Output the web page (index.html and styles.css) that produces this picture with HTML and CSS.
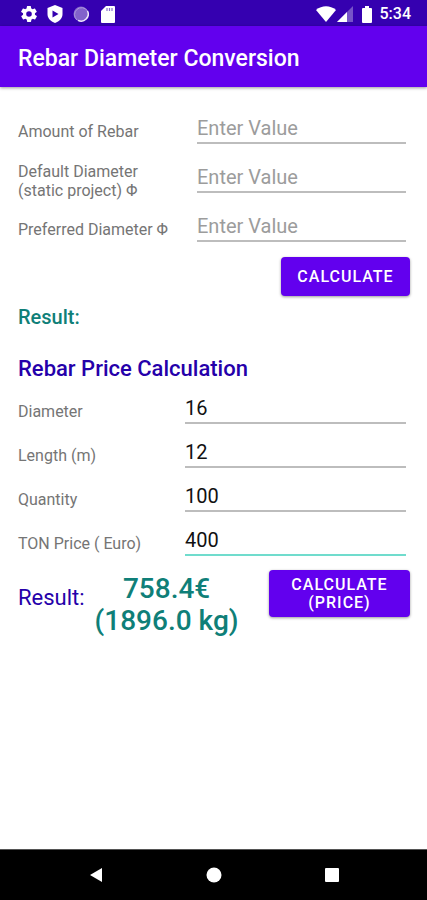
FILE: index.html
```html
<!DOCTYPE html>
<html lang="en">
<head>
<meta charset="utf-8">
<meta name="viewport" content="width=device-width, initial-scale=1">
<title>Rebar Diameter Conversion</title>
<link rel="stylesheet" href="styles.css">
</head>
<body>
<div class="status-bar">
  <div class="status-icons">
    <svg class="gear" viewBox="2 2 20 20"><path fill="#fff" d="M19.4 13a7.500 7.500 0 0 0 0-2l2.100-1.600a.5.5 0 0 0 .1-.6l-2-3.500a.5.5 0 0 0-.6-.2l-2.500 1a7.300 7.300 0 0 0-1.700-1l-.4-2.600a.5.5 0 0 0-.5-.4h-4a.5.5 0 0 0-.5.4l-.4 2.600a7.700 7.700 0 0 0-1.700 1l-2.500-1a.5.5 0 0 0-.6.2l-2 3.500a.5.5 0 0 0 .1.6L4.600 11a7.900 7.900 0 0 0 0 2l-2.100 1.600a.5.5 0 0 0-.1.6l2 3.500c.1.2.4.3.6.2l2.500-1a7.300 7.300 0 0 0 1.700 1l.4 2.600c0 .3.2.5.5.5h4c.3 0 .5-.2.5-.5l.4-2.600a7.700 7.700 0 0 0 1.700-1l2.500 1c.2.1.5 0 .6-.2l2-3.500a.5.5 0 0 0-.1-.6zM12 15.500a3.500 3.500 0 1 1 0-7 3.500 3.500 0 0 1 0 7z"/></svg>
    <svg class="shield" viewBox="0 0 16 18"><path fill="#fff" d="M8 0 .5 3v6c0 4 3 7.500 7.500 9 4.500-1.500 7.500-5 7.500-9V3z"/><path fill="#3500b0" d="M5.500 5.500v7l6-3.500z"/></svg>
    <svg class="sync" viewBox="0 0 16 16"><circle cx="8" cy="8" r="7.500" fill="#8262cb"/><path d="M14.500 5A7 7 0 0 1 5 14.300" fill="none" stroke="#eee6fa" stroke-width="1.500"/><path d="M4 14A7 7 0 1 1 14.500 5" fill="none" stroke="#ac98dd"/></svg>
    <svg class="card" viewBox="0 0 14 17"><path fill="#fff" d="M5 0h8a1 1 0 0 1 1 1v15a1 1 0 0 1-1 1H1a1 1 0 0 1-1-1V5z"/><path stroke="#8a70d0" stroke-width="1.200" d="M6 2v3M8.500 2v3M11 2v3"/></svg>
  </div>
  <div class="status-system">
    <svg class="wifi" viewBox="0 0 20 16"><path fill="#fff" d="M0 4C6-1 14-1 20 4L10 16z"/></svg>
    <svg class="signal" viewBox="0 0 16 16"><path fill="#7653c8" d="M16 0v16H0z"/><path fill="#fff" d="M10 6v10H0z"/></svg>
    <svg class="battery" viewBox="0 0 10 17"><path fill="#fff" d="M3 0h4v2h2a1 1 0 0 1 1 1v13a1 1 0 0 1-1 1H1a1 1 0 0 1-1-1V3a1 1 0 0 1 1-1h2z"/></svg>
    <span class="clock">5:34</span>
  </div>
</div>
<header class="app-bar"><h1>Rebar Diameter Conversion</h1></header>
<main>
  <form class="conversion">
    <div class="row"><label for="amount">Amount of Rebar</label><input id="amount" type="text" placeholder="Enter Value"></div>
    <div class="row"><label for="default">Default Diameter<br>(static project) Φ</label><input id="default" type="text" placeholder="Enter Value"></div>
    <div class="row"><label for="preferred">Preferred Diameter Φ</label><input id="preferred" type="text" placeholder="Enter Value"></div>
    <button class="calculate" type="button">CALCULATE</button>
    <p class="result">Result:</p>
  </form>
  <form class="price">
    <h2>Rebar Price Calculation</h2>
    <div class="row"><label for="diameter">Diameter</label><input id="diameter" type="text" value="16"></div>
    <div class="row"><label for="length">Length (m)</label><input id="length" type="text" value="12"></div>
    <div class="row"><label for="quantity">Quantity</label><input id="quantity" type="text" value="100"></div>
    <div class="row"><label for="ton">TON Price ( Euro)</label><input id="ton" class="active" type="text" value="400"></div>
    <div class="summary">
      <span class="summary-label">Result:</span>
      <output class="total" for="diameter length quantity ton">758.4€<br>(1896.0 kg)</output>
      <button class="calculate-price" type="button">CALCULATE<br>(PRICE)</button>
    </div>
  </form>
</main>
<nav class="system-nav">
  <button type="button" aria-label="Back"><svg viewBox="0 0 16 16"><path fill="#fff" d="M14 1v14L2 8z"/></svg></button>
  <button type="button" aria-label="Home"><svg viewBox="0 0 16 16"><circle cx="8" cy="8" r="7.500" fill="#fff"/></svg></button>
  <button type="button" aria-label="Recent apps"><svg viewBox="0 0 16 16"><rect x="1" y="1" width="14" height="14" rx="1" fill="#fff"/></svg></button>
</nav>
</body>
</html>
```
FILE: styles.css
```css
* { box-sizing: border-box; }
body {
  margin: 0;
  min-height: 100vh;
  display: flex;
  flex-direction: column;
  background: #fff;
  font-family: Roboto, sans-serif;
}
h1, h2, p { margin: 0; }
button, input { font-family: inherit; }
svg { display: block; }

.status-bar {
  display: flex;
  justify-content: space-between;
  align-items: center;
  height: 26px;
  padding: 2px 16px 0 21px;
  background: #3500b0;
}
.status-icons, .status-system { display: flex; align-items: center; }
.status-icons { gap: 10px; }
.gear, .sync { width: 16px; height: 16px; }
.shield { width: 16px; height: 18px; }
.card { width: 14px; height: 17px; margin-left: 2px; }
.wifi { width: 20px; height: 16px; }
.signal { width: 16px; height: 16px; margin-left: 1px; }
.battery { width: 10px; height: 17px; margin: 0 8px 0 9px; }
.clock { color: #fff; font-size: 16px; font-weight: 500; line-height: 20px; }

.app-bar {
  position: relative;
  display: flex;
  align-items: center;
  height: 61px;
  padding: 4px 18px 0;
  background: #6200ee;
  box-shadow: 0 1px 3px rgba(0, 0, 0, 0.4);
}
h1 { color: #fff; font-size: 23px; font-weight: 500; line-height: 28px; }

main { flex: 1; padding: 20px 17px 0 18px; }
form { display: flex; flex-direction: column; }
.row { display: grid; align-items: center; padding-right: 4px; }
.conversion .row { height: 49px; grid-template-columns: 179px 1fr; }
.price .row { height: 44px; grid-template-columns: 167px 1fr; }
label { color: #757575; font-size: 16px; line-height: 19px; }
.price label { padding-bottom: 2px; }
input {
  align-self: start;
  width: 100%;
  min-width: 0;
  height: 37px;
  padding: 7px 0 0;
  border: 0;
  border-bottom: 2px solid #bdbdbd;
  border-radius: 0;
  outline: 0;
  background: none;
  color: #111;
  font-size: 20px;
}
.price input { height: 34px; padding-top: 3px; }
input::placeholder { color: #9c9c9c; opacity: 1; }
input.active { border-color: #70dccd; }

.calculate, .calculate-price {
  padding: 0;
  border: 0;
  border-radius: 4px;
  background: #6200ee;
  box-shadow: 0 1px 3px rgba(0, 0, 0, 0.4);
  color: #fff;
  font-size: 16px;
  font-weight: 500;
  line-height: 18px;
  letter-spacing: 1px;
}
.calculate { align-self: flex-end; width: 129px; height: 39px; margin-top: 3px; }
.calculate-price { width: 141px; height: 47px; margin: 4px 0 0 auto; }
.result { margin-top: 9px; color: #0f7f78; font-size: 20px; font-weight: 500; line-height: 24px; }
h2 { margin: 26px 0 7px; color: #2500aa; font-size: 22px; font-weight: 500; line-height: 28px; }
.summary { display: flex; align-items: flex-start; }
.summary-label { margin: 18px 10px 0 0; color: #2500aa; font-size: 22px; line-height: 28px; }
.total { margin-top: 7px; color: #0f7f78; font-size: 28px; font-weight: 500; line-height: 32px; text-align: center; }

.system-nav {
  display: flex;
  justify-content: center;
  align-items: center;
  height: 51px;
  border-top: 1px solid #555;
  background: #000;
}
.system-nav button { width: 118px; padding: 0; border: 0; background: none; }
.system-nav svg { width: 16px; height: 16px; margin: 0 auto; }
```
